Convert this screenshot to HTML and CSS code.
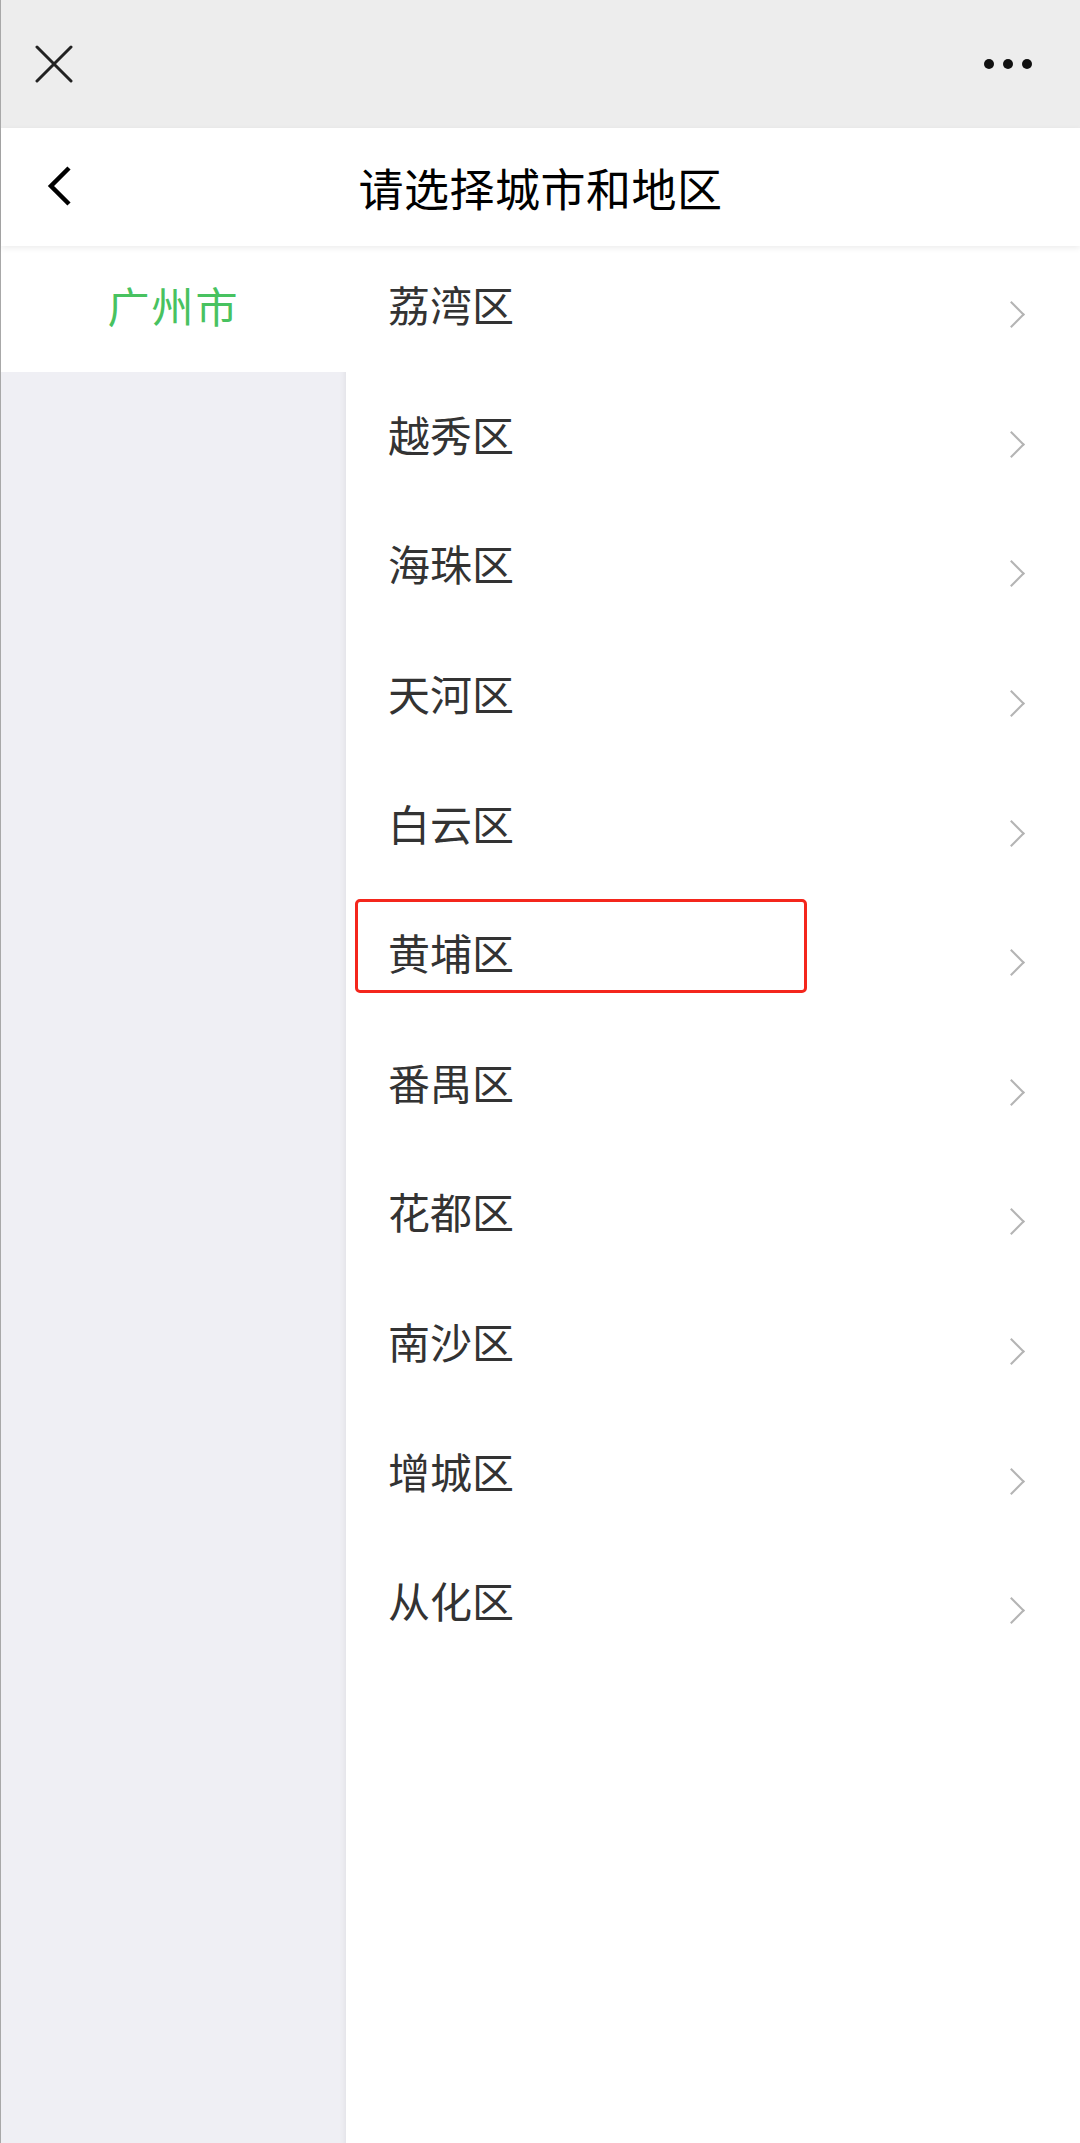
FILE: index.html
```html
<!DOCTYPE html>
<html lang="zh-CN">

<head>
    <meta charset="UTF-8" />
    <meta name="viewport" content="width=device-width, initial-scale=1.0" />
    <title>请选择城市和地区</title>
    <link rel="stylesheet" href="styles.css">
</head>

<body>
    <div class="page">
        <div class="topbar">
            <svg class="close" width="38" height="38" viewBox="0 0 38 38">
                <path d="M2 2 L36 36 M36 2 L2 36" stroke="#222" stroke-width="3" stroke-linecap="round" fill="none" />
            </svg>
            <div class="more">
                <span></span><span></span><span></span>
            </div>
        </div>

        <header class="navbar">
            <svg class="back" width="26" height="40" viewBox="0 0 26 40">
                <path d="M22 2 L4 20 L22 38" stroke="#000" stroke-width="4.5" fill="none" />
            </svg>
            <h1>请选择城市和地区</h1>
        </header>

        <main class="picker">
            <aside class="cities">
                <div class="city active">广州市</div>
            </aside>

            <ul class="districts">
                <li>荔湾区</li>
                <li>越秀区</li>
                <li>海珠区</li>
                <li>天河区</li>
                <li>白云区</li>
                <li class="marked">黄埔区<span class="mark"></span></li>
                <li>番禺区</li>
                <li>花都区</li>
                <li>南沙区</li>
                <li>增城区</li>
                <li>从化区</li>
            </ul>
        </main>
    </div>
</body>

</html>
```

FILE: styles.css
```css
* {
    margin: 0;
    padding: 0;
    box-sizing: border-box;
    font-family: "Noto Sans CJK SC", "Noto Sans", sans-serif;
}

body {
    background: #fff;
    color: #333;
}

.page {
    min-height: 100vh;
    display: flex;
    flex-direction: column;
    border-left: 1px solid #a8a8a8;
}

.topbar {
    height: 128px;
    background: #ededed;
    display: flex;
    align-items: center;
    justify-content: space-between;
    padding: 0 48px 0 34px;
}

.close {
    display: block;
}

.more {
    display: flex;
    gap: 9px;
}

.more span {
    width: 10px;
    height: 10px;
    border-radius: 50%;
    background: #111;
}

.navbar {
    position: relative;
    z-index: 2;
    height: 118px;
    background: #fff;
    display: flex;
    align-items: center;
    justify-content: center;
    box-shadow: 0 2px 6px rgba(0, 0, 0, 0.08);
}

.back {
    position: absolute;
    left: 46px;
    top: 38px;
}

.navbar h1 {
    font-size: 45px;
    font-weight: 400;
    color: #000;
    letter-spacing: 0.5px;
}

.picker {
    flex: 1;
    display: flex;
}

.cities {
    width: 345px;
    background: #efeff4;
    box-shadow: inset -6px 0 5px -4px rgba(0, 0, 0, 0.05);
}

.city {
    height: 126px;
    display: flex;
    align-items: center;
    justify-content: center;
    padding-bottom: 10px;
    font-size: 42px;
    letter-spacing: 2px;
}

.city.active {
    background: #fff;
    color: #48c260;
}

.districts {
    flex: 1;
    list-style: none;
}

.districts li {
    position: relative;
    height: 129.6px;
    display: flex;
    align-items: center;
    padding: 0 59px 14px 42px;
    font-size: 42px;
    color: #333;
}

.districts li::after {
    content: "";
    margin-left: auto;
    margin-top: 22px;
    width: 17px;
    height: 17px;
    border-top: 2px solid #b4b4b4;
    border-right: 2px solid #b4b4b4;
    transform: rotate(45deg);
}

.mark {
    position: absolute;
    left: 9px;
    top: 5px;
    width: 452px;
    height: 94px;
    border: 3px solid #f4261c;
    border-radius: 5px;
}
```
